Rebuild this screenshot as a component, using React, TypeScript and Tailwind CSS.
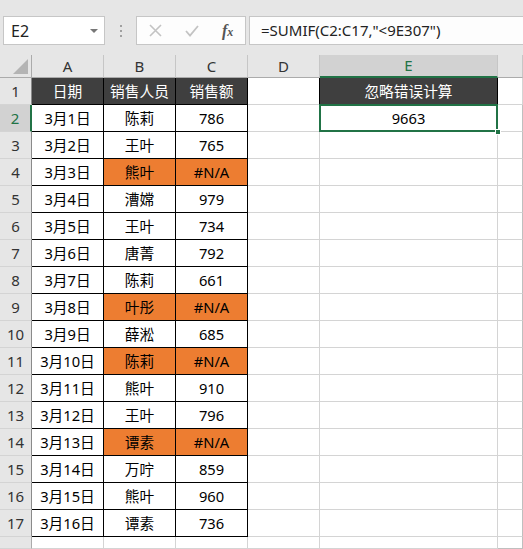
const FONT = { fontFamily: '"Noto Sans", "Noto Sans CJK SC", sans-serif' };

const COLS = ["A", "B", "C", "D", "E", "F"];

type Row = { date: string; name: string; amount: string; err?: boolean };

const ROWS: Row[] = [
  { date: "3月1日", name: "陈莉", amount: "786" },
  { date: "3月2日", name: "王叶", amount: "765" },
  { date: "3月3日", name: "熊叶", amount: "#N/A", err: true },
  { date: "3月4日", name: "漕嫦", amount: "979" },
  { date: "3月5日", name: "王叶", amount: "734" },
  { date: "3月6日", name: "唐菁", amount: "792" },
  { date: "3月7日", name: "陈莉", amount: "661" },
  { date: "3月8日", name: "叶彤", amount: "#N/A", err: true },
  { date: "3月9日", name: "薛淞", amount: "685" },
  { date: "3月10日", name: "陈莉", amount: "#N/A", err: true },
  { date: "3月11日", name: "熊叶", amount: "910" },
  { date: "3月12日", name: "王叶", amount: "796" },
  { date: "3月13日", name: "谭素", amount: "#N/A", err: true },
  { date: "3月14日", name: "万咛", amount: "859" },
  { date: "3月15日", name: "熊叶", amount: "960" },
  { date: "3月16日", name: "谭素", amount: "736" },
];

function FormulaBar() {
  return (
    <div className="flex h-[55px] items-start bg-[#e6e6e6] pt-4">
      <div className="ml-[3px] flex h-[29px] w-[102px] items-center justify-between border border-[#c6c6c6] bg-white pl-[7px] pr-[6px]">
        <span className="text-[16px] text-[#222]">E2</span>
        <span className="h-0 w-0 border-x-[4px] border-t-[4px] border-x-transparent border-t-[#777]" />
      </div>
      <div className="flex w-[31px] flex-col items-center gap-[3px] pt-[9px]">
        <span className="h-[2px] w-[2px] bg-[#a0a0a0]" />
        <span className="h-[2px] w-[2px] bg-[#a0a0a0]" />
        <span className="h-[2px] w-[2px] bg-[#a0a0a0]" />
      </div>
      <div className="flex h-[29px] w-[110px] items-center border border-[#c6c6c6] bg-[#fdfdfd]">
        <svg className="ml-[12px]" width="13" height="13" viewBox="0 0 13 13">
          <path d="M1 1 L12 12 M12 1 L1 12" stroke="#c3c3c3" strokeWidth="1.6" fill="none" />
        </svg>
        <svg className="ml-[23px]" width="14" height="12" viewBox="0 0 14 12">
          <path d="M1 6 L5 10.5 L13 1" stroke="#c3c3c3" strokeWidth="1.8" fill="none" />
        </svg>
        <span
          className="ml-[23px] text-[16px] font-bold italic text-[#555]"
          style={{ fontFamily: '"Liberation Serif", serif' }}
        >
          f<span className="text-[12px]">x</span>
        </span>
      </div>
      <div className="ml-[3px] flex h-[29px] flex-1 items-center border border-r-0 border-[#c6c6c6] bg-[#fdfdfd] pl-[11px]">
        <span className="text-[15px] text-[#222]">=SUMIF(C2:C17,"&lt;9E307")</span>
      </div>
    </div>
  );
}

function Grid() {
  const cells: React.ReactNode[] = [];

  // column headers
  cells.push(
    <div key="corner" className="relative border-b border-r border-[#ababab] bg-[#e6e6e6]">
      <span className="absolute bottom-[3px] right-[3px] h-0 w-0 border-b-[15px] border-l-[15px] border-b-[#b4b4b4] border-l-transparent" />
    </div>
  );
  COLS.forEach((c) =>
    cells.push(
      c === "E" ? (
        <div
          key={"h" + c}
          className="flex items-center justify-center border-b-2 border-r border-b-[#217346] border-r-[#c6c6c6] bg-[#d2d2d2] text-[15px] text-[#217346]"
        >
          {c}
        </div>
      ) : (
        <div
          key={"h" + c}
          className="flex items-center justify-center border-b border-r border-b-[#ababab] border-r-[#c6c6c6] bg-[#e6e6e6] text-[15px] text-[#333]"
        >
          {c === "F" ? "" : c}
        </div>
      )
    )
  );

  for (let r = 1; r <= 18; r++) {
    const data = r >= 2 && r <= 17 ? ROWS[r - 2] : null;

    // row header
    if (r === 2) {
      cells.push(
        <div
          key={"r" + r}
          className="flex items-center justify-center border-b border-r-2 border-b-[#d4d4d4] border-r-[#217346] bg-[#d2d2d2] text-[15px] text-[#217346]"
        >
          {r}
        </div>
      );
    } else {
      cells.push(
        <div
          key={"r" + r}
          className={
            "flex items-center justify-center border-b border-r border-b-[#d4d4d4] bg-[#e6e6e6] text-[15px] text-[#333] " +
            (r <= 17 ? "border-r-[#8a8a8a]" : "border-r-[#ababab]")
          }
        >
          {r === 18 ? "" : r}
        </div>
      );
    }

    if (r === 1) {
      ["日期", "销售人员", "销售额"].forEach((t) =>
        cells.push(
          <div
            key={"t" + t}
            className="flex items-center justify-center border-b border-r border-black bg-[#3f3f3f] text-[14.7px] text-white"
          >
            {t}
          </div>
        )
      );
      cells.push(<div key="d1" className="border-b border-r border-b-[#d4d4d4] border-r-black" />);
      cells.push(
        <div
          key="e1"
          className="flex items-center justify-center border-b border-r border-black bg-[#3f3f3f] text-[14.7px] text-white"
        >
          忽略错误计算
        </div>
      );
      cells.push(<div key="f1" className="border-b border-r border-[#d4d4d4]" />);
      continue;
    }

    if (data) {
      cells.push(
        <div key={"a" + r} className="flex items-center justify-center border-b border-r border-black text-[14.7px] text-black">
          {data.date}
        </div>
      );
      cells.push(
        <div
          key={"b" + r}
          className={
            "flex items-center justify-center border-b border-r border-black text-[14.7px] text-black " +
            (data.err ? "bg-[#ed7d31]" : "bg-white")
          }
        >
          {data.name}
        </div>
      );
      cells.push(
        <div
          key={"c" + r}
          className={
            "flex items-center justify-center border-b border-r border-black text-[14.7px] text-black " +
            (data.err ? "bg-[#ed7d31]" : "bg-white")
          }
        >
          {data.amount}
        </div>
      );
    } else {
      ["a", "b", "c"].forEach((k) =>
        cells.push(<div key={k + r} className="border-b border-r border-[#d4d4d4]" />)
      );
    }

    cells.push(<div key={"d" + r} className="border-b border-r border-[#d4d4d4]" />);

    if (r === 2) {
      cells.push(
        <div key="e2" className="relative flex items-center justify-center border-b border-r border-[#d4d4d4] text-[14.7px] text-black">
          9663
          <span className="absolute -inset-[1px] border-2 border-[#217346]" />
          <span className="absolute -bottom-[4px] -right-[4px] h-[6px] w-[6px] border border-white bg-[#217346]" />
        </div>
      );
    } else {
      cells.push(<div key={"e" + r} className="border-b border-r border-[#d4d4d4]" />);
    }
    cells.push(
      <div
        key={"f" + r}
        className={"border-r border-r-[#bfbfbf] border-b " + (r === 18 ? "border-b-[#bfbfbf]" : "border-b-[#d4d4d4]")}
      />
    );
  }

  return (
    <div className="grid grid-cols-[32px_72px_72px_72px_72px_178px_25px] grid-rows-[23px_repeat(17,27px)_12px]">
      {cells}
    </div>
  );
}

export default function App() {
  return (
    <div className="h-[549px] w-[523px] overflow-hidden bg-white" style={FONT}>
      <FormulaBar />
      <Grid />
    </div>
  );
}
